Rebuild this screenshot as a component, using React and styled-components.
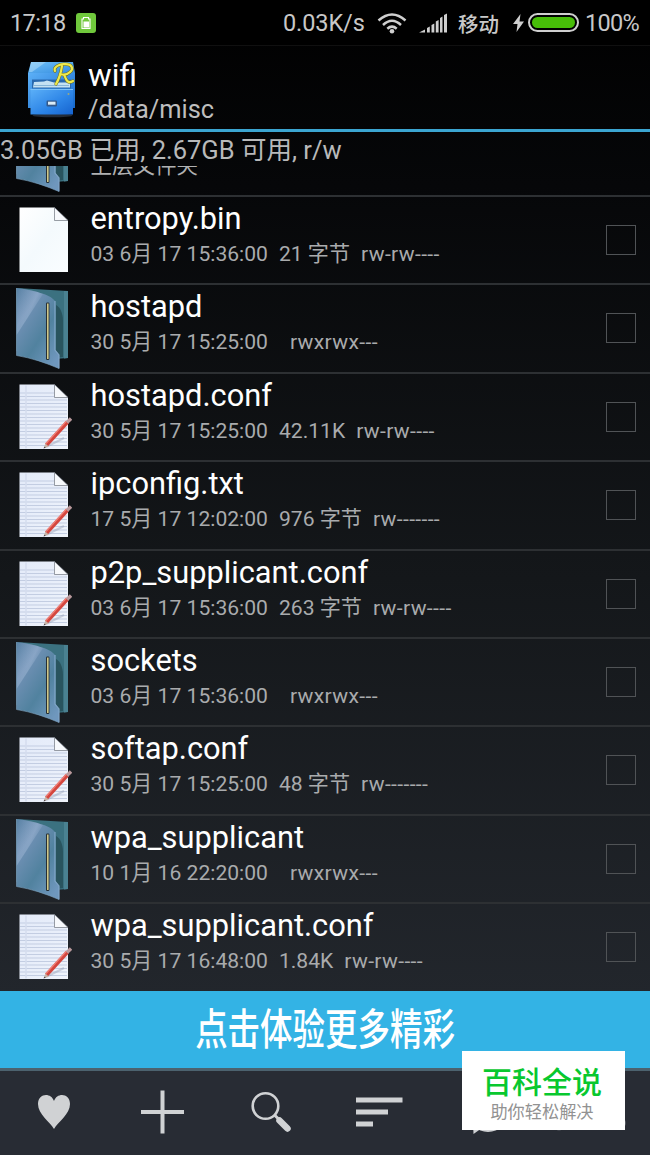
import React from 'react';
import styled, { createGlobalStyle } from 'styled-components';

// Data
const files = [
    { name: 'entropy.bin', kind: 'blank', date: '03 6月 17 15:36:00', size: '21 字节', mode: 'rw-rw----' },
    { name: 'hostapd', kind: 'folder', date: '30 5月 17 15:25:00', size: '', mode: 'rwxrwx---' },
    { name: 'hostapd.conf', kind: 'text', date: '30 5月 17 15:25:00', size: '42.11K', mode: 'rw-rw----' },
    { name: 'ipconfig.txt', kind: 'text', date: '17 5月 17 12:02:00', size: '976 字节', mode: 'rw-------' },
    { name: 'p2p_supplicant.conf', kind: 'text', date: '03 6月 17 15:36:00', size: '263 字节', mode: 'rw-rw----' },
    { name: 'sockets', kind: 'folder', date: '03 6月 17 15:36:00', size: '', mode: 'rwxrwx---' },
    { name: 'softap.conf', kind: 'text', date: '30 5月 17 15:25:00', size: '48 字节', mode: 'rw-------' },
    { name: 'wpa_supplicant', kind: 'folder', date: '10 1月 16 22:20:00', size: '', mode: 'rwxrwx---' },
    { name: 'wpa_supplicant.conf', kind: 'text', date: '30 5月 17 16:48:00', size: '1.84K', mode: 'rw-rw----' },
];

const FolderIcon = () => (
    <FileSvg viewBox="0 0 60 88">
        <path d="M4.500 4L56 7V74L42 75L4.500 67Z" fill="#3b7180" />
        <path d="M44 21C48 23 51 29 51 37V73L44 74Z" fill="#29545e" />
        <path d="M52 7H56V74L52 74.500Z" fill="#4a8191" />
        <path d="M4.500 4C20 6 38 10 43 17V66L47 71V84.500C34 79 20 74 4.500 71.500Z" fill="url(#folderFront)" />
        <path d="M4.500 4C14 5 24 7 31 10L4.500 51Z" fill="url(#folderShine)" />
        <path d="M4.500 4V71.500C20 74 34 79 47 84.500" fill="none" stroke="#7ea3c0" strokeWidth="0.600" />
        <path d="M43 17V66L47 71V84.500" fill="none" stroke="#82a6c8" strokeWidth="1.200" />
        <rect x="34" y="18.500" width="3.400" height="57.500" rx="1.200" fill="#262f35" />
        <rect x="35" y="19.500" width="1.600" height="55.500" fill="#cfc98a" />
    </FileSvg>
);

const PageIcon = ({ lined }) => (
    <FileSvg viewBox="0 0 60 88">
        <path d="M7.500 11.500H42.500L56 24.500V76H7.500Z" fill={lined ? 'url(#pageLined)' : 'url(#pageBlank)'} />
        {lined && (
            <>
                <path
                    d="M8 20H42M8 23.500H42M8 27H55M8 30.500H55M8 34H55M8 37.500H55M8 41H55M8 44.500H55M8 48H55M8 51.500H55M8 55H55M8 58.500H55M8 62H55M8 65.500H55M8 69H55M8 72.500H55"
                    stroke="#c3cde2"
                    strokeWidth="1"
                />
                <path d="M14 12.500V75.500" stroke="#d5dcee" strokeWidth="1.500" />
            </>
        )}
        <path d="M42.500 11.500L56 24.500H42.500Z" fill="#f7f9fc" stroke="#6f747e" strokeWidth="0.700" />
        {lined && (
            <>
                <path d="M34 74L52 65" stroke="#9aa3b8" strokeWidth="2" opacity="0.45" />
                <path d="M34.500 72L55.500 49" stroke="#d4463e" strokeWidth="4" />
                <path d="M34 70.500L54.500 48" stroke="#ee8178" strokeWidth="1.200" />
                <path d="M55 49.500L59 45.500" stroke="#b9999c" strokeWidth="3.400" />
                <path d="M32 75L33.300 70.500L36.600 73.500Z" fill="#c9b4a5" />
                <path d="M31.500 75.500L32.500 73.500L33.800 74.700Z" fill="#4a4144" />
            </>
        )}
    </FileSvg>
);

const CabinetIcon = () => (
    <CabinetSvg viewBox="0 0 50 58">
        <ellipse cx="24.500" cy="54.500" rx="20" ry="1.800" fill="#43536a" opacity="0.5" />
        <path d="M3 1H45L47 12H0Z" fill="url(#cabTop)" />
        <path d="M3 1H18L4 11H1Z" fill="#b9e2fa" opacity="0.5" />
        <path d="M0 12H47V47H0Z" fill="url(#cabBody)" />
        <path d="M2.500 28H45V53.500H2.500Z" fill="url(#cabDrawer)" />
        <path d="M4 18.500H43V27.500H4Z" fill="#2868ad" />
        <path d="M6 21L16 20.500L19 19.500L26 21.500H42V26.500H5Z" fill="#c4e1f3" />
        <path d="M5 24.500H41" stroke="#86b5d8" strokeWidth="1" />
        <path d="M2.500 28.500H45" stroke="#7cc1f8" strokeWidth="1" />
        <rect x="18.500" y="39.500" width="10.500" height="6" rx="1.200" fill="#34598a" />
        <rect x="20" y="40.700" width="7.500" height="3" fill="#dcecf6" />
        <circle cx="40.500" cy="33" r="1" fill="#9ca97f" />
        {/* handwritten R badge */}
        <path
            d="M27 10C25 6 32 2.500 37 3.200C44 3 46 8 42 11C39 14 35 14 32 13M34 5C33 12 31 18 28 23M36 14C38 16 38 24 45 20"
            fill="none"
            stroke="#746f12"
            strokeWidth="3.200"
            strokeLinecap="round"
        />
        <path
            d="M27 10C25 6 32 2.500 37 3.200C44 3 46 8 42 11C39 14 35 14 32 13M34 5C33 12 31 18 28 23M36 14C38 16 38 24 45 20"
            fill="none"
            stroke="#eeea4e"
            strokeWidth="2.200"
            strokeLinecap="round"
        />
    </CabinetSvg>
);

// Gradients shared by all list icons
const IconDefs = () => (
    <DefsSvg aria-hidden="true">
        <defs>
            <linearGradient id="folderFront" x1="0" y1="0" x2="0.800" y2="1">
                <stop offset="0" stopColor="#507b9f" />
                <stop offset="0.300" stopColor="#6f90b4" />
                <stop offset="0.650" stopColor="#51829f" />
                <stop offset="1" stopColor="#6f97bd" />
            </linearGradient>
            <linearGradient id="folderShine" x1="0" y1="0" x2="0.800" y2="0.600">
                <stop offset="0" stopColor="#c5d6ef" stopOpacity="0.05" />
                <stop offset="0.700" stopColor="#c5d6ef" stopOpacity="0.3" />
                <stop offset="1" stopColor="#c5d6ef" stopOpacity="0" />
            </linearGradient>
            <linearGradient id="pageBlank" x1="0" y1="0" x2="1" y2="1">
                <stop offset="0" stopColor="#fff" />
                <stop offset="0.500" stopColor="#f4fafd" />
                <stop offset="1" stopColor="#fafdff" />
            </linearGradient>
            <linearGradient id="pageLined" x1="0" y1="0" x2="1" y2="1">
                <stop offset="0" stopColor="#e4ebf9" />
                <stop offset="0.500" stopColor="#e8eefa" />
                <stop offset="1" stopColor="#f0f4fb" />
            </linearGradient>
            <linearGradient id="cabTop" x1="0" y1="0" x2="1" y2="1">
                <stop offset="0" stopColor="#6fc0f7" />
                <stop offset="1" stopColor="#348ce0" />
            </linearGradient>
            <linearGradient id="cabBody" x1="0" y1="0" x2="1" y2="1">
                <stop offset="0" stopColor="#5cb0f7" />
                <stop offset="1" stopColor="#1568cb" />
            </linearGradient>
            <linearGradient id="cabDrawer" x1="0" y1="0" x2="1" y2="1">
                <stop offset="0" stopColor="#5cb0f8" />
                <stop offset="0.600" stopColor="#2b83e6" />
                <stop offset="1" stopColor="#1663ce" />
            </linearGradient>
        </defs>
    </DefsSvg>
);

const StatusBar = () => (
    <StatusWrapper>
        <Clock>17:18</Clock>
        <BatteryApp viewBox="0 0 20 20">
            <rect width="20" height="20" rx="3" fill="#70c83c" />
            <path d="M7.500 4.500H12.500V6H14V15.500H6V6H7.500Z" fill="none" stroke="#fff" strokeWidth="1.100" />
            <rect x="7.500" y="8.500" width="5.500" height="6" fill="#fff" />
        </BatteryApp>
        <Speed>0.03K/s</Speed>
        <WifiSvg viewBox="0 0 30 22">
            <path d="M1.500 8.500Q15 -3.500 28.500 8.500M6 13Q15 4.500 24 13M10.300 16.700Q15 12.500 19.700 16.700" fill="none" stroke="#cfcfcf" strokeWidth="2.500" />
            <circle cx="15" cy="19.300" r="2.300" fill="#cfcfcf" />
        </WifiSvg>
        <SignalSvg viewBox="0 0 28 20">
            <path d="M0 19.500L6 16.500V19.500ZM8 15L10.800 13.500V19.500H8ZM12.500 12L15.300 10.500V19.500H12.500ZM16.800 8.500L19.600 7V19.500H16.800ZM21 5L23.500 3.500V19.500H21ZM25 2L28 0.500V19.500H25Z" fill="#cfcfcf" />
        </SignalSvg>
        <Carrier>移动</Carrier>
        <BoltSvg viewBox="0 0 11 18">
            <path d="M7.500 0L0 10H4.500L3.500 18L11 7.500H6.500Z" fill="#cfcfcf" />
        </BoltSvg>
        <Battery>
            <BatteryLevel />
        </Battery>
        <Percent>100%</Percent>
    </StatusWrapper>
);

const FileRow = ({ file }) => (
    <Row>
        {file.kind === 'folder' ? <FolderIcon /> : <PageIcon lined={file.kind === 'text'} />}
        <RowText>
            <FileName>{file.name}</FileName>
            <Meta>
                <span>{file.date}</span>
                <span>{file.size}</span>
                <Mode>{file.mode}</Mode>
            </Meta>
        </RowText>
        <Checkbox />
    </Row>
);

const App = () => {
    return (
        <Screen>
            <GlobalStyle />
            <IconDefs />
            <StatusBar />

            <Header>
                <CabinetIcon />
                <HeaderText>
                    <Title>wifi</Title>
                    <Path>/data/misc</Path>
                </HeaderText>
            </Header>

            <Storage>3.05GB 已用, 2.67GB 可用, r/w</Storage>

            <List>
                <ParentRow>
                    <FolderIcon />
                    <ParentText>上层文件夹</ParentText>
                </ParentRow>
                {files.map(file => (
                    <FileRow file={file} key={file.name} />
                ))}
            </List>

            <Banner>
                <BannerText>点击体验更多精彩</BannerText>
            </Banner>

            <Toolbar>
                <ToolButton>
                    <ToolSvg viewBox="0 0 48 48">
                        <path d="M24 41C20 34 8 26 8 16C8 5 21 4 24 13C27 4 40 5 40 16C40 26 28 34 24 41Z" fill="#d0d2d4" />
                    </ToolSvg>
                </ToolButton>
                <ToolButton>
                    <ToolSvg viewBox="0 0 48 48">
                        <path d="M24.500 2.500V45.500M3 24H46" stroke="#d0d2d4" strokeWidth="4" />
                    </ToolSvg>
                </ToolButton>
                <ToolButton>
                    <ToolSvg viewBox="0 0 48 48">
                        <circle cx="18.500" cy="18" r="12.800" fill="none" stroke="#d0d2d4" strokeWidth="2.600" />
                        <path d="M27.500 27L32 31.500" stroke="#d0d2d4" strokeWidth="3" />
                        <path d="M32.500 32.500L40.500 40.500" stroke="#d0d2d4" strokeWidth="6.500" strokeLinecap="round" />
                    </ToolSvg>
                </ToolButton>
                <ToolButton>
                    <ToolSvg viewBox="0 0 48 48">
                        <path d="M1 9.500H47.500V14.500H1ZM1 21.500H33V26.500H1ZM1 33.500H18V38.500H1Z" fill="#d0d2d4" />
                    </ToolSvg>
                </ToolButton>
                <ToolButton>
                    <ToolSvg viewBox="0 0 48 48">
                        <ellipse cx="25" cy="25" rx="20" ry="19" fill="#d0d2d4" />
                        <path d="M10 34L10.500 46L19 40Z" fill="#d0d2d4" />
                    </ToolSvg>
                </ToolButton>
                <ToolButton>
                    <ToolSvg viewBox="0 0 48 48">
                        <circle cx="-13" cy="38.500" r="4" fill="#5a5e65" />
                        <circle cx="49" cy="35" r="5" fill="#5a5e65" />
                    </ToolSvg>
                </ToolButton>
            </Toolbar>

            <Stamp>
                <StampTitle>百科全说</StampTitle>
                <StampText>助你轻松解决</StampText>
            </Stamp>
        </Screen>
    );
};

export default App;

const GlobalStyle = createGlobalStyle`
    * {
        box-sizing: border-box;
    }

    body {
        margin: 0;
        background: #000;
    }
`;

const Screen = styled.div`
    position: relative;
    width: 650px;
    height: 1155px;
    overflow: hidden;

    display: flex;
    flex-direction: column;

    background: linear-gradient(180deg, #000 0%, #060709 16%, #14171a 50%, #22262c 86%, #282c34 100%);
    font-family: Roboto, "Noto Sans CJK SC", sans-serif;
    color: #fff;
    white-space: nowrap;
`;

const DefsSvg = styled.svg`
    position: absolute;
    width: 0;
    height: 0;
`;

const StatusWrapper = styled.div`
    flex: none;
    height: 46px;
    padding: 0 11px 0 10px;
    border-bottom: 1px solid #101010;

    display: flex;
    align-items: center;

    background: #000;
    color: #c8c8c8;
    font-size: 23.5px;
`;

const Clock = styled.span`
    width: 66px;
    letter-spacing: -0.6px;
`;

const BatteryApp = styled.svg`
    width: 20px;
    height: 20px;
`;

const Speed = styled.span`
    margin-left: auto;
    width: 94px;
    letter-spacing: -0.1px;
`;

const WifiSvg = styled.svg`
    width: 30px;
    height: 22px;
`;

const SignalSvg = styled.svg`
    width: 28px;
    height: 20px;
    margin-left: 12px;
`;

const Carrier = styled.span`
    width: 55px;
    margin-left: 11px;
    font-size: 20.5px;
    font-weight: 500;
`;

const BoltSvg = styled.svg`
    width: 11px;
    height: 18px;
`;

const Battery = styled.div`
    width: 51px;
    height: 19px;
    margin: 0 6px 0 4px;
    padding: 2px;
    border: 2px solid #cfcfcf;
    border-radius: 10px;
`;

const BatteryLevel = styled.div`
    height: 100%;
    border-radius: 6px;
    background: #47bd08;
`;

const Percent = styled.span`
    width: 54px;
    letter-spacing: -0.7px;
`;

const Header = styled.div`
    flex: none;
    height: 86px;
    padding-left: 28px;
    border-bottom: 3px solid #3ba5d1;

    display: flex;
`;

const CabinetSvg = styled.svg`
    width: 50px;
    height: 58px;
    margin-top: 15px;
`;

const HeaderText = styled.div`
    padding: 12px 0 0 10px;
`;

const Title = styled.div`
    font-size: 31.6px;
    line-height: 36px;
`;

const Path = styled.div`
    color: #bebebe;
    font-size: 25.4px;
    line-height: 31px;
`;

const Storage = styled.div`
    flex: none;
    height: 34px;

    color: #b8b9ba;
    font-size: 25.5px;
    line-height: 36px;
`;

const List = styled.div`
    flex: none;
    height: 825px;
    overflow: hidden;

    display: flex;
    flex-direction: column;
`;

const FileSvg = styled.svg`
    flex: none;
    width: 60px;
    height: 88px;
    margin: -1px 0 0 11.5px;
`;

const Row = styled.div`
    flex: none;
    height: 88.4px;
    border-bottom: 2px solid #2d3033;

    display: flex;
    align-items: flex-start;

    &:last-child {
        border-bottom: 0;
    }
`;

// Scrolled up, only its lower part is in view
const ParentRow = styled(Row)`
    height: 31px;
    align-items: flex-end;
    overflow: hidden;

    ${FileSvg} {
        margin-bottom: 0;
    }
`;

const ParentText = styled.div`
    margin-left: 19px;
    color: #b0b1b2;
    font-size: 21.5px;
    line-height: 24px;
    padding-bottom: 17px;
`;

const RowText = styled.div`
    flex: 1;
    padding: 4px 0 0 19px;
`;

const FileName = styled.div`
    font-size: 30.8px;
    line-height: 36px;
`;

const Meta = styled.div`
    display: flex;
    gap: 11px;

    color: #a9abad;
    font-size: 21.1px;
    line-height: 34px;
`;

const Mode = styled.span`
    letter-spacing: 0.35px;
`;

const Checkbox = styled.div`
    width: 30px;
    height: 30px;
    margin: 28px 14px 0 0;
    border: 1.5px solid #505356;
`;

const Banner = styled.div`
    flex: none;
    height: 77px;

    display: flex;
    align-items: center;
    justify-content: center;

    background: #33b3e5;
`;

const BannerText = styled.div`
    font-size: 43px;
    font-weight: 500;
    line-height: 60px;
    transform: scaleX(0.755);
`;

const Toolbar = styled.div`
    flex: 1;
    padding-bottom: 3px;
    border-top: 3px solid #4c626e;

    display: grid;
    grid-template-columns: repeat(6, 1fr);
    align-items: center;

    background: #282c34;
`;

const ToolButton = styled.div`
    height: 81px;

    display: flex;
    align-items: center;
    justify-content: center;
`;

const ToolSvg = styled.svg`
    width: 48px;
    height: 48px;
    overflow: visible;
`;

const Stamp = styled.div`
    position: absolute;
    right: 25px;
    bottom: 25px;
    width: 163px;
    height: 79px;
    padding: 14px 3px 0 0;

    background: #fff;
    text-align: center;
`;

const StampTitle = styled.div`
    color: #08c82f;
    font-size: 30px;
    font-weight: 500;
    line-height: 36px;
`;

const StampText = styled.div`
    color: #929292;
    font-size: 17.2px;
    line-height: 22px;
`;
